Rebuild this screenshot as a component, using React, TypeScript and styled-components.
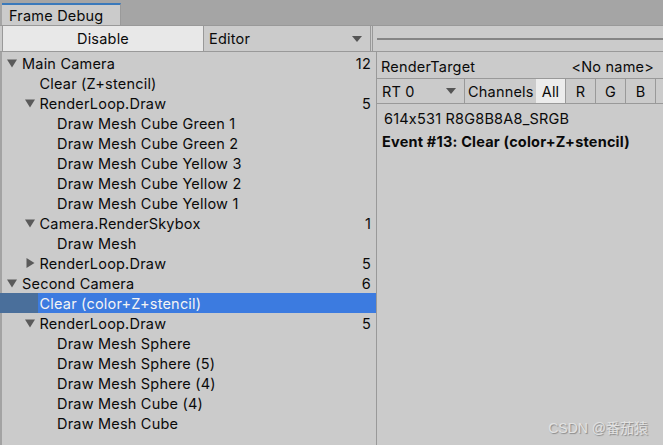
import React, { ReactElement } from 'react';
import styled, { createGlobalStyle } from 'styled-components';

const PANEL = '#cbcbcb';
const LINE = '#999999';
const TEXT = '#0a0a0a';

interface EventNode {
  label: string;
  depth: number;
  count?: number;
  arrow?: 'open' | 'closed';
  selected?: boolean;
}

const events: EventNode[] = [
  { label: 'Main Camera', depth: 0, count: 12, arrow: 'open' },
  { label: 'Clear (Z+stencil)', depth: 1 },
  { label: 'RenderLoop.Draw', depth: 1, count: 5, arrow: 'open' },
  { label: 'Draw Mesh Cube Green 1', depth: 2 },
  { label: 'Draw Mesh Cube Green 2', depth: 2 },
  { label: 'Draw Mesh Cube Yellow 3', depth: 2 },
  { label: 'Draw Mesh Cube Yellow 2', depth: 2 },
  { label: 'Draw Mesh Cube Yellow 1', depth: 2 },
  { label: 'Camera.RenderSkybox', depth: 1, count: 1, arrow: 'open' },
  { label: 'Draw Mesh', depth: 2 },
  { label: 'RenderLoop.Draw', depth: 1, count: 5, arrow: 'closed' },
  { label: 'Second Camera', depth: 0, count: 6, arrow: 'open' },
  { label: 'Clear (color+Z+stencil)', depth: 1, selected: true },
  { label: 'RenderLoop.Draw', depth: 1, count: 5, arrow: 'open' },
  { label: 'Draw Mesh Sphere', depth: 2 },
  { label: 'Draw Mesh Sphere (5)', depth: 2 },
  { label: 'Draw Mesh Sphere (4)', depth: 2 },
  { label: 'Draw Mesh Cube (4)', depth: 2 },
  { label: 'Draw Mesh Cube', depth: 2 },
];

const channels = ['All', 'R', 'G', 'B', ''];

const GlobalStyle = createGlobalStyle`
  body {
    margin: 0;
    background: ${PANEL};
    font-family: Inter, 'Noto Sans', 'Liberation Sans', sans-serif;
    font-size: 14.5px;
    letter-spacing: 0.2px;
    font-feature-settings: 'calt' 0;
    color: ${TEXT};
  }
`;

const Window = styled.div`
  width: 663px;
  height: 445px;
  display: flex;
  flex-direction: column;
  overflow: hidden;
  position: relative;
`;

const TabStrip = styled.div`
  height: 25px;
  background: #a5a5a5;
  display: flex;
  align-items: flex-end;
  padding-left: 2px;
`;

const Tab = styled.div`
  width: 111px;
  height: 20px;
  padding-left: 7px;
  background: ${PANEL};
  border-top: 2px solid #3a79bb;
  border-right: 1px solid #9a9a9a;
  display: flex;
  align-items: center;
`;

const Toolbar = styled.div`
  height: 25px;
  display: flex;
  background: ${PANEL};
  border-top: 1px solid ${LINE};
  border-bottom: 1px solid ${LINE};
`;

const DisableButton = styled.div`
  width: 200px;
  margin-left: 2px;
  background: #e8e8e8;
  border-left: 1px solid ${LINE};
  border-right: 1px solid ${LINE};
  display: flex;
  align-items: center;
  justify-content: center;
`;

const Dropdown = styled.div<{ $width: number }>`
  width: ${(p) => p.$width}px;
  padding: 0 8px 0 5px;
  display: flex;
  align-items: center;
  justify-content: space-between;
  border-right: 1px solid ${LINE};
  box-sizing: border-box;
  flex-shrink: 0;
`;

const Caret = styled.span`
  width: 0;
  height: 0;
  border-left: 5px solid transparent;
  border-right: 5px solid transparent;
  border-top: 6px solid #555;
`;

const SliderArea = styled.div`
  flex: 1;
  display: flex;
  align-items: center;
  padding-left: 4px;
  margin-left: 1px;
  border-left: 1px solid ${LINE};
`;

const SliderTrack = styled.div`
  flex: 1;
  height: 2px;
  background: #858585;
`;

const Body = styled.div`
  flex: 1;
  display: flex;
  min-height: 0;
`;

const Tree = styled.div`
  width: 374px;
  border-left: 2px solid #a3a3a3;
  border-right: 1px solid ${LINE};
  padding-top: 1px;
  flex-shrink: 0;
`;

const Row = styled.div<{ $depth: number; $selected?: boolean }>`
  height: 20px;
  display: flex;
  align-items: center;
  padding-right: 5px;
  color: ${(p) => (p.$selected ? '#f4f4f4' : TEXT)};
  background: ${(p) =>
    p.$selected
      ? `linear-gradient(to right, #4a6f9b ${20 + p.$depth * 18}px, #3c7be0 ${20 + p.$depth * 18}px)`
      : 'transparent'};
  margin-left: -2px;
`;

const Indent = styled.span<{ $depth: number }>`
  width: ${(p) => 22 + p.$depth * 17.5}px;
  flex-shrink: 0;
  display: flex;
  justify-content: flex-end;
  padding-right: 5px;
  box-sizing: border-box;
`;

const Label = styled.span`
  flex: 1;
  white-space: nowrap;
`;

const Count = styled.span`
  text-align: right;
`;

const Details = styled.div`
  flex: 1;
  min-width: 0;
  overflow: hidden;
  display: flex;
  flex-direction: column;
`;

const TargetRow = styled.div`
  height: 27px;
  display: flex;
  align-items: center;
  justify-content: space-between;
  padding: 3px 9px 0 4px;
  border-bottom: 1px solid ${LINE};
  box-sizing: border-box;
  white-space: nowrap;
`;

const ControlRow = styled.div`
  height: 24px;
  display: flex;
  border-bottom: 1px solid ${LINE};
`;

const ChannelLabel = styled.div`
  width: 71px;
  flex-shrink: 0;
  display: flex;
  align-items: center;
  padding-left: 3px;
  box-sizing: border-box;
  white-space: nowrap;
`;

const ChannelButton = styled.div<{ $active?: boolean }>`
  width: 30px;
  flex-shrink: 0;
  display: flex;
  align-items: center;
  justify-content: center;
  background: ${(p) => (p.$active ? '#ececec' : PANEL)};
  border-right: 1px solid ${LINE};
  box-sizing: border-box;
`;

const Info = styled.div<{ $bold?: boolean }>`
  padding: 0 6px;
  height: 23px;
  display: flex;
  align-items: center;
  white-space: nowrap;
  font-weight: ${(p) => (p.$bold ? 700 : 400)};
  margin-left: ${(p) => (p.$bold ? -1 : 1)}px;
`;

const InfoBlock = styled.div`
  padding-top: 3px;
`;

const Watermark = styled.div`
  position: absolute;
  right: 15px;
  bottom: 8px;
  font-size: 14px;
  letter-spacing: 0;
  color: #e2e2e2;
  text-shadow: 1px 1px 1px #8a8a8a;
  font-family: 'Liberation Sans', 'Noto Sans CJK SC', sans-serif;
`;

const Arrow = ({ kind }: { kind: 'open' | 'closed' }): ReactElement => (
  <svg width='10' height='10' viewBox='0 0 10 10'>
    {kind === 'open' ? (
      <polygon points='0,1.5 10,1.5 5,9.5' fill='#5a5a5a' />
    ) : (
      <polygon points='1.5,0 9.5,5 1.5,10' fill='#5a5a5a' />
    )}
  </svg>
);

export const App = (): ReactElement => {
  return (
    <Window>
      <GlobalStyle />
      <TabStrip>
        <Tab>Frame Debug</Tab>
      </TabStrip>
      <Toolbar>
        <DisableButton>Disable</DisableButton>
        <Dropdown $width={167}>
          Editor
          <Caret />
        </Dropdown>
        <SliderArea>
          <SliderTrack />
        </SliderArea>
      </Toolbar>
      <Body>
        <Tree>
          {events.map((e, i) => (
            <Row key={i} $depth={e.depth} $selected={e.selected}>
              <Indent $depth={e.depth}>{e.arrow && <Arrow kind={e.arrow} />}</Indent>
              <Label>{e.label}</Label>
              {e.count !== undefined && <Count>{e.count}</Count>}
            </Row>
          ))}
        </Tree>
        <Details>
          <TargetRow>
            <span>RenderTarget</span>
            <span>&lt;No name&gt;</span>
          </TargetRow>
          <ControlRow>
            <Dropdown $width={88}>
              RT 0
              <Caret />
            </Dropdown>
            <ChannelLabel>Channels</ChannelLabel>
            {channels.map((c, i) => (
              <ChannelButton key={i} $active={c === 'All'}>
                {c}
              </ChannelButton>
            ))}
          </ControlRow>
          <InfoBlock>
            <Info>614x531 R8G8B8A8_SRGB</Info>
            <Info $bold>Event #13: Clear (color+Z+stencil)</Info>
          </InfoBlock>
        </Details>
      </Body>
      <Watermark>CSDN @番茄猿</Watermark>
    </Window>
  );
};

export default App;
